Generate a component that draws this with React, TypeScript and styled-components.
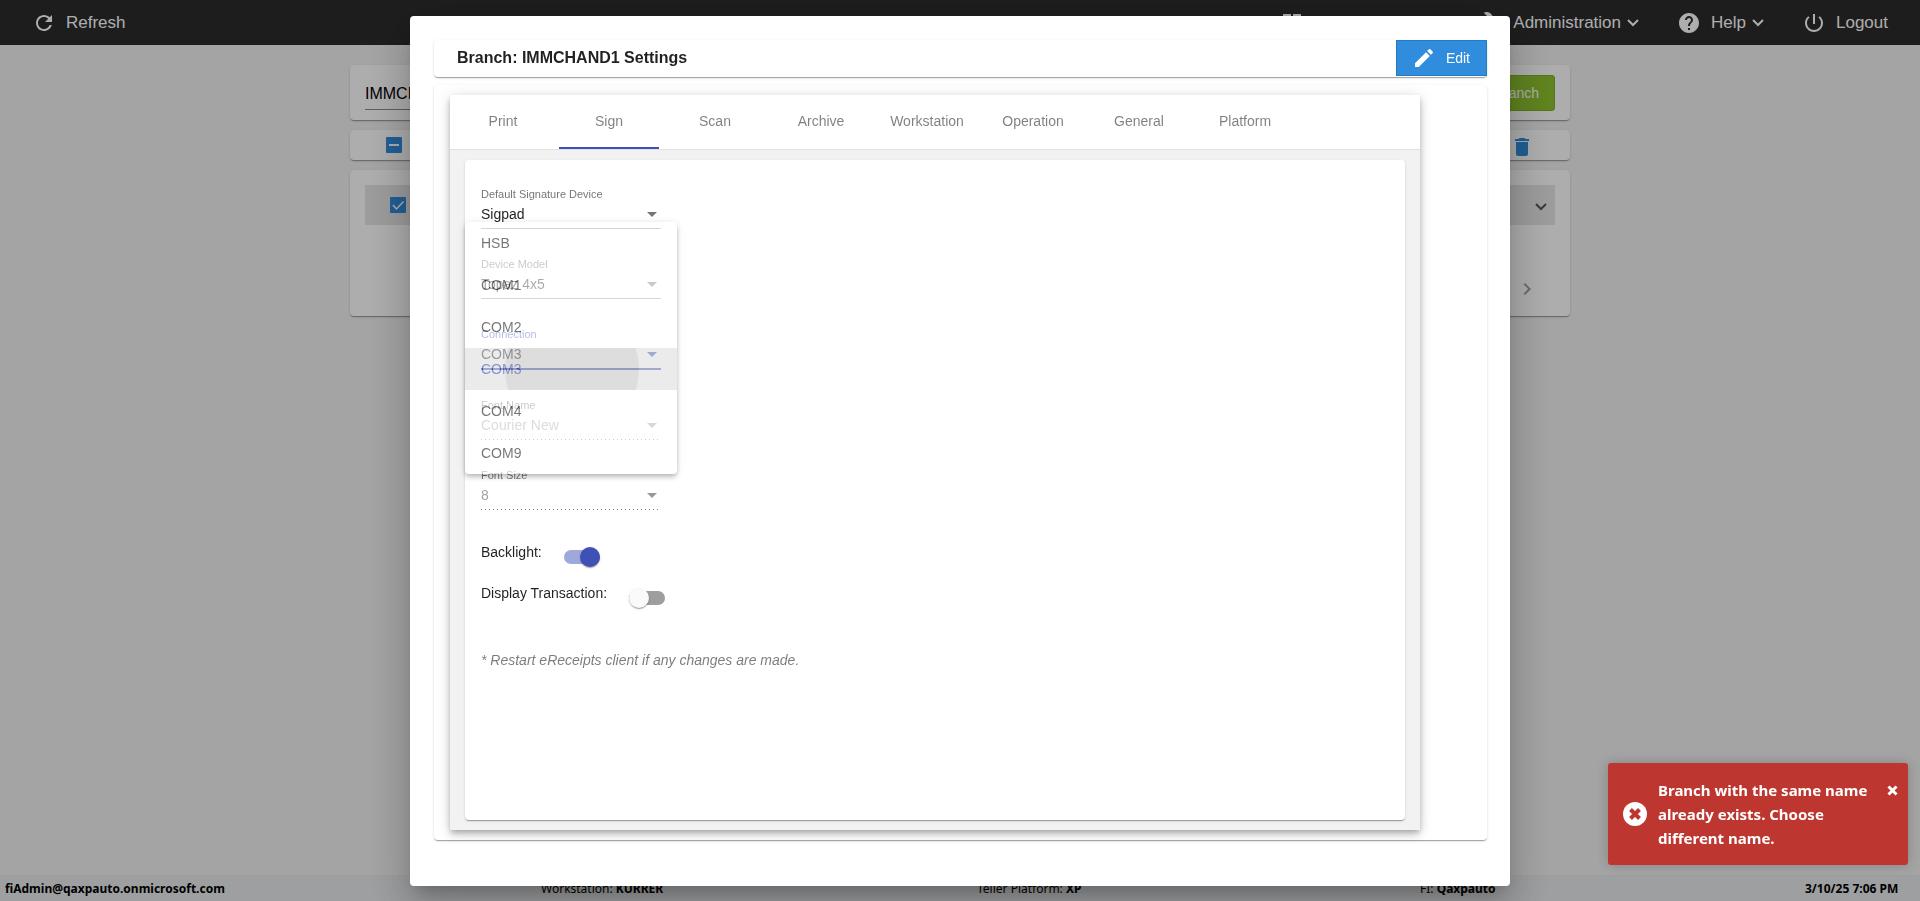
import React from "react";
import styled, { createGlobalStyle, css } from "styled-components";

const GlobalStyle = createGlobalStyle`
  *, *::before, *::after { box-sizing: border-box; }
  html, body, #root { height: 100%; }
  body {
    margin: 0;
    background: #f2f2f2;
    color: rgba(0, 0, 0, 0.87);
    font-family: "Liberation Sans", Arial, sans-serif;
    font-size: 14px;
    overflow: hidden;
  }
  button, input, select { font: inherit; }
  button { cursor: pointer; }
  p, h1 { margin: 0; }
`;

const cardShadow = css`
  box-shadow: 0 2px 1px -1px rgba(0, 0, 0, 0.2), 0 1px 1px rgba(0, 0, 0, 0.14), 0 1px 3px rgba(0, 0, 0, 0.12);
`;

/* ---------- Page shell ---------- */

const Page = styled.div`
  display: flex;
  flex-direction: column;
  min-height: 100vh;
`;

const TopBar = styled.header`
  display: flex;
  justify-content: space-between;
  align-items: center;
  height: 45px;
  padding: 0 32px;
  background: #2c2c2c;
  color: #fff;
`;

const NavGroup = styled.nav`
  display: flex;
  align-items: center;
  gap: 38px;
`;

const NavButton = styled.button`
  display: flex;
  align-items: center;
  height: 36px;
  padding: 0;
  border: 0;
  background: none;
  color: inherit;
  font-size: 17px;
  line-height: 20px;
`;

const NavLabel = styled.span`
  margin: 0 6px 0 10px;
  &:last-child { margin-right: 0; }
`;

const Content = styled.main`
  flex: 1;
  display: flex;
  flex-direction: column;
  gap: 10px;
  width: 100%;
  max-width: 1220px;
  margin: 0 auto;
  padding-top: 20px;
`;

const Card = styled.section`
  border-radius: 4px;
  background: #fff;
  ${cardShadow}
`;

const SearchCard = styled(Card)`
  display: flex;
  justify-content: space-between;
  align-items: flex-start;
  padding: 10px 15px 9px;
`;

const SearchInput = styled.input`
  width: 320px;
  height: 35px;
  padding: 4px 0 0;
  border: 0;
  border-bottom: 1px solid #8c8c8c;
  background: none;
  color: #000;
  font-size: 16px;
  outline: 0;
`;

const AddButton = styled.button`
  height: 36px;
  padding: 0 15px;
  border: 1px solid #7eae28;
  border-radius: 3px;
  background: #8dc22e;
  color: #fff;
`;

const ActionCard = styled(Card)`
  display: flex;
  justify-content: space-between;
  align-items: flex-start;
  height: 30px;
  padding: 5px 36px 0;
`;

const CheckLabel = styled.label`
  position: relative;
  display: flex;
  width: 16px;
  height: 16px;
  margin-top: 2px;
`;

const HiddenCheck = styled.input`
  position: absolute;
  inset: 0;
  margin: 0;
  opacity: 0;
`;

const PlainButton = styled.button`
  display: flex;
  padding: 0;
  border: 0;
  background: none;
`;

const ListCard = styled(Card)`
  display: flex;
  flex-direction: column;
  justify-content: space-between;
  height: 146px;
  padding: 15px;
`;

const BranchRow = styled.div`
  display: flex;
  justify-content: space-between;
  align-items: flex-start;
  height: 40px;
  padding: 10px 8px 0 25px;
  background: #e6e6e6;
`;

const ExpandButton = styled(PlainButton)`
  padding: 8px 0;
`;

const Pager = styled.div`
  display: flex;
  justify-content: flex-end;
  padding-right: 16px;
`;

const Footer = styled.footer`
  display: grid;
  grid-template-columns: 536fr 436fr 443fr 385fr 103fr;
  align-items: center;
  height: 26px;
  padding: 0 12px 0 5px;
  background: #e8eaec;
  color: #000;
  font-family: "Noto Sans", sans-serif;
  font-size: 12px;
  white-space: nowrap;
`;

/* ---------- Dialog ---------- */

const Backdrop = styled.div`
  position: fixed;
  inset: 0;
  display: flex;
  justify-content: center;
  align-items: flex-start;
  padding: 16px 16px 15px;
  background: rgba(0, 0, 0, 0.32);
`;

const Dialog = styled.div`
  display: flex;
  flex-direction: column;
  gap: 8px;
  width: 1100px;
  max-width: 100%;
  height: 100%;
  padding: 24px 23px 46px 24px;
  border-radius: 4px;
  background: #fff;
  box-shadow: 0 11px 15px -7px rgba(0, 0, 0, 0.2), 0 24px 38px 3px rgba(0, 0, 0, 0.14), 0 9px 46px 8px rgba(0, 0, 0, 0.12);
`;

const TitleCard = styled(Card)`
  display: flex;
  justify-content: space-between;
  align-items: flex-start;
  height: 37px;
  padding-left: 23px;
`;

const Title = styled.h1`
  font-size: 16px;
  line-height: 36px;
  font-weight: 700;
`;

const EditButton = styled.button`
  display: flex;
  align-items: center;
  gap: 10px;
  height: 36px;
  padding: 0 16px 0 15px;
  border: 1px solid #2879be;
  background: #308ddd;
  color: #fff;
`;

const SettingsCard = styled(Card)`
  flex: 1;
  display: flex;
  padding: 10px 16px;
`;

const TabPanel = styled.div`
  display: flex;
  flex-direction: column;
  width: 95%;
  background: #f2f2f2;
  box-shadow: 0 3px 5px -1px rgba(0, 0, 0, 0.2), 0 5px 8px rgba(0, 0, 0, 0.14), 0 1px 14px rgba(0, 0, 0, 0.12);
`;

const TabBar = styled.div`
  display: flex;
  gap: 6px;
  height: 55px;
  padding: 0 3px;
  border-bottom: 1px solid #e0e0e0;
  background: #fff;
`;

const Tab = styled.button<{ $active?: boolean }>`
  width: 100px;
  padding: 0;
  border: 0;
  border-bottom: 2px solid ${({ $active }) => ($active ? "#3f51b5" : "transparent")};
  background: none;
  color: rgba(0, 0, 0, 0.5);
`;

const FormCard = styled(Card)`
  flex: 1;
  display: flex;
  flex-direction: column;
  margin: 10px 15px;
  padding: 27px 16px 16px;
`;

const FieldList = styled.div`
  position: relative;
  display: flex;
  flex-direction: column;
  align-items: flex-start;
  gap: 28px;
`;

type FieldKind = "normal" | "focused" | "disabled";

const arrowColors: Record<FieldKind, string> = {
  normal: "rgba(0, 0, 0, 0.54)",
  focused: "#3f51b5",
  disabled: "rgba(0, 0, 0, 0.4)",
};

const FieldBox = styled.div<{ $kind: FieldKind }>`
  position: relative;
  display: flex;
  flex-direction: column;
  width: 180px;
  border-bottom: ${({ $kind }) =>
    $kind === "focused" ? "2px solid #3f51b5" : $kind === "normal" ? "1px solid #949494" : "0"};
  padding-bottom: ${({ $kind }) => ($kind === "disabled" ? 1 : 0)}px;
  ${({ $kind }) =>
    $kind === "disabled" &&
    css`
      background: linear-gradient(to right, rgba(0, 0, 0, 0.5) 0, rgba(0, 0, 0, 0.5) 1px, transparent 1px) 0 100% / 4px 1px repeat-x;
    `}
`;

const FieldLabel = styled.label<{ $focused?: boolean }>`
  color: ${({ $focused }) => ($focused ? "#3f51b5" : "rgba(0, 0, 0, 0.56)")};
  font-size: 11px;
  line-height: 14px;
`;

const FieldSelect = styled.select`
  width: 100%;
  height: 27px;
  padding: 0 0 1px;
  border: 0;
  background: none;
  color: rgba(0, 0, 0, 0.87);
  appearance: none;
  outline: 0;
  opacity: 1;
  &:disabled { color: rgba(0, 0, 0, 0.38); }
`;

const Arrow = styled.span<{ $kind: FieldKind }>`
  position: absolute;
  right: 4px;
  top: 25px;
  border: 5px solid transparent;
  border-bottom: 0;
  border-top-color: ${({ $kind }) => arrowColors[$kind]};
  pointer-events: none;
`;

const Menu = styled.div`
  position: absolute;
  z-index: 2;
  top: 35px;
  left: -16px;
  width: 212px;
  border-radius: 4px;
  background: #fff;
  overflow: hidden;
  opacity: 0.62;
  box-shadow: 0 2px 4px -1px rgba(0, 0, 0, 0.3), 0 4px 5px rgba(0, 0, 0, 0.2), 0 1px 10px rgba(0, 0, 0, 0.16);
`;

const Option = styled.button<{ $selected?: boolean }>`
  position: relative;
  display: flex;
  align-items: center;
  width: 100%;
  height: 42px;
  padding: 0 16px;
  border: 0;
  overflow: hidden;
  background: ${({ $selected }) => ($selected ? "rgba(0, 0, 0, 0.12)" : "none")};
  color: ${({ $selected }) => ($selected ? "#3f51b5" : "rgba(0, 0, 0, 0.87)")};
`;

const Ripple = styled.span`
  position: absolute;
  left: 40px;
  top: 50%;
  width: 134px;
  height: 134px;
  margin-top: -67px;
  border-radius: 50%;
  background: rgba(0, 0, 0, 0.1);
`;

const Toggles = styled.div`
  display: flex;
  flex-direction: column;
  gap: 21px;
  margin-top: 29px;
`;

const ToggleRow = styled.label`
  display: flex;
  align-items: flex-start;
  gap: 22px;
  height: 20px;
  line-height: 26px;
`;

const ToggleInput = styled.input`
  position: relative;
  appearance: none;
  width: 36px;
  height: 14px;
  margin: 11px 0 0;
  border-radius: 7px;
  background: #9e9e9e;
  &::before {
    content: "";
    position: absolute;
    top: -3px;
    left: 0;
    width: 20px;
    height: 20px;
    border-radius: 50%;
    background: #fafafa;
    box-shadow: 0 2px 1px -1px rgba(0, 0, 0, 0.2), 0 1px 1px rgba(0, 0, 0, 0.14), 0 1px 3px rgba(0, 0, 0, 0.12);
  }
  &:checked { background: #9fa8da; }
  &:checked::before { left: 16px; background: #3f51b5; }
`;

const Note = styled.p`
  margin-top: 51px;
  color: rgba(0, 0, 0, 0.52);
  font-style: italic;
  line-height: 18px;
`;

/* ---------- Toast ---------- */

const Toast = styled.div`
  position: fixed;
  right: 12px;
  bottom: 36px;
  display: flex;
  align-items: center;
  width: 300px;
  padding: 15px;
  border-radius: 3px;
  background: #bd362f;
  color: #fff;
  box-shadow: 0 0 12px rgba(0, 0, 0, 0.2);
  font-family: "Noto Sans", sans-serif;
  font-size: 15px;
  font-weight: 700;
  line-height: 24px;
`;

const ToastText = styled.p`
  flex: 1;
  margin-left: 11px;
`;

const ToastClose = styled(PlainButton)`
  align-self: flex-start;
  margin: 7px -5px 0 0;
`;

/* ---------- Icons ---------- */

const Glyph = ({ d, size = 24, color = "currentColor" }: { d: string; size?: number; color?: string }) => (
  <svg width={size} height={size} viewBox="0 0 24 24" fill={color} aria-hidden="true">
    <path d={d} />
  </svg>
);

const REFRESH = "M17.65 6.35C16.2 4.9 14.21 4 12 4c-4.42 0-7.99 3.58-7.99 8s3.57 8 7.99 8c3.73 0 6.84-2.55 7.73-6h-2.08c-.82 2.33-3.04 4-5.65 4-3.31 0-6-2.69-6-6s2.69-6 6-6c1.66 0 3.14.69 4.22 1.78L13 11h7V4l-2.35 2.35z";
const HELP = "M12 2C6.48 2 2 6.48 2 12s4.48 10 10 10 10-4.48 10-10S17.52 2 12 2zm1 17h-2v-2h2v2zm2.07-7.75l-.9.92C13.45 12.9 13 13.5 13 15h-2v-.5c0-1.1.45-2.1 1.17-2.83l1.24-1.26c.37-.36.59-.86.59-1.41 0-1.1-.9-2-2-2s-2 .9-2 2H8c0-2.21 1.79-4 4-4s4 1.79 4 4c0 .88-.36 1.68-.93 2.25z";
const POWER = "M13 3h-2v10h2V3zm4.83 2.17l-1.42 1.42C17.99 7.86 19 9.81 19 12c0 3.87-3.13 7-7 7s-7-3.13-7-7c0-2.19 1.01-4.14 2.58-5.42L6.17 5.17C4.23 6.82 3 9.26 3 12c0 4.97 4.03 9 9 9s9-4.03 9-9c0-2.74-1.23-5.18-3.17-6.83z";
const PENCIL = "M3 17.25V21h3.75L17.81 9.94l-3.75-3.75L3 17.25zM20.71 7.04c.39-.39.39-1.02 0-1.41l-2.34-2.34c-.39-.39-1.02-.39-1.41 0l-1.83 1.83 3.75 3.75 1.83-1.83z";
const TRASH = "M6 19c0 1.1.9 2 2 2h8c1.1 0 2-.9 2-2V7H6v12zM19 4h-3.5l-1-1h-5l-1 1H5v2h14V4z";
const WRENCH = "M22.7 19l-9.1-9.1c.9-2.3.4-5-1.5-6.9-2-2-5-2.4-7.4-1.3L9 6 6 9 1.6 4.7C.4 7.1.9 10.1 2.9 12.1c1.9 1.9 4.6 2.4 6.9 1.5l9.1 9.1c.4.4 1 .4 1.4 0l2.3-2.3c.5-.4.5-1.1.1-1.4z";
const DASHBOARD = "M3 13h8V3H3v10zm0 8h8v-6H3v6zm10 0h8V11h-8v10zm0-18v6h8V3h-8z";
const NEXT = "M10 6L8.59 7.41 13.17 12l-4.58 4.59L10 18l6-6z";

const Chevron = ({ color = "currentColor" }: { color?: string }) => (
  <svg width="12" height="8" viewBox="0 0 12 8" fill="none" stroke={color} strokeWidth="2" aria-hidden="true">
    <path d="M1 1l5 5 5-5" />
  </svg>
);

const BoxIcon = ({ checked }: { checked?: boolean }) => (
  <svg width="16" height="16" viewBox="0 0 16 16" fill="none" aria-hidden="true">
    <rect width="16" height="16" rx="1" fill="#308ddd" />
    <path d={checked ? "M3 8l3.5 4L13.500 4.500" : "M3 8h10"} stroke="#fff" strokeWidth={checked ? 1.5 : 2} />
  </svg>
);

const CircleX = () => (
  <svg width="24" height="24" viewBox="0 0 24 24" aria-hidden="true">
    <circle cx="12" cy="12" r="12" fill="#fff" />
    <path d="M7.500 7.500l9 9M16.500 7.500l-9 9" stroke="#bd362f" strokeWidth="4" />
  </svg>
);

const CloseX = () => (
  <svg width="11" height="11" viewBox="0 0 11 11" aria-hidden="true">
    <path d="M1.500 1.500l8 8M9.500 1.500l-8 8" stroke="#fff" strokeWidth="3" />
  </svg>
);

/* ---------- Data ---------- */

const tabs = ["Print", "Sign", "Scan", "Archive", "Workstation", "Operation", "General", "Platform"];

const fields: { id: string; label: string; value: string; kind: FieldKind }[] = [
  { id: "device", label: "Default Signature Device", value: "Sigpad", kind: "normal" },
  { id: "model", label: "Device Model", value: "Topaz 4x5", kind: "normal" },
  { id: "connection", label: "Connection", value: "COM3", kind: "focused" },
  { id: "font-name", label: "Font Name", value: "Courier New", kind: "disabled" },
  { id: "font-size", label: "Font Size", value: "8", kind: "disabled" },
];

const ports = ["HSB", "COM1", "COM2", "COM3", "COM4", "COM9"];

export default function App() {
  return (
    <>
      <GlobalStyle />
      <Page>
        <TopBar>
          <NavGroup>
            <NavButton><Glyph d={REFRESH} /><NavLabel>Refresh</NavLabel></NavButton>
          </NavGroup>
          <NavGroup>
            <NavButton><Glyph d={DASHBOARD} /><NavLabel>Configurations</NavLabel><Chevron /></NavButton>
            <NavButton><Glyph d={WRENCH} /><NavLabel>Administration</NavLabel><Chevron /></NavButton>
            <NavButton><Glyph d={HELP} /><NavLabel>Help</NavLabel><Chevron /></NavButton>
            <NavButton><Glyph d={POWER} /><NavLabel>Logout</NavLabel></NavButton>
          </NavGroup>
        </TopBar>
        <Content>
          <SearchCard>
            <SearchInput aria-label="Search branches" defaultValue="IMMCHAND1" />
            <AddButton>Add Branch</AddButton>
          </SearchCard>
          <ActionCard>
            <CheckLabel><HiddenCheck type="checkbox" aria-label="Select all" /><BoxIcon /></CheckLabel>
            <PlainButton aria-label="Delete"><Glyph d={TRASH} color="#308ddd" /></PlainButton>
          </ActionCard>
          <ListCard>
            <BranchRow>
              <CheckLabel><HiddenCheck type="checkbox" aria-label="Select branch" defaultChecked /><BoxIcon checked /></CheckLabel>
              <ExpandButton aria-label="Expand"><Chevron color="#555" /></ExpandButton>
            </BranchRow>
            <Pager>
              <PlainButton aria-label="Next page"><Glyph d={NEXT} color="#a0a0a0" /></PlainButton>
            </Pager>
          </ListCard>
        </Content>
        <Footer>
          <b>fiAdmin@qaxpauto.onmicrosoft.com</b>
          <span>Workstation: <b>KURRER</b></span>
          <span>Teller Platform: <b>XP</b></span>
          <span>FI: <b>Qaxpauto</b></span>
          <b>3/10/25 7:06 PM</b>
        </Footer>
      </Page>

      <Backdrop>
        <Dialog role="dialog" aria-labelledby="dialog-title">
          <TitleCard>
            <Title id="dialog-title">Branch: IMMCHAND1 Settings</Title>
            <EditButton><Glyph d={PENCIL} />Edit</EditButton>
          </TitleCard>
          <SettingsCard>
            <TabPanel>
              <TabBar role="tablist">
                {tabs.map((name) => (
                  <Tab key={name} role="tab" aria-selected={name === "Sign"} $active={name === "Sign"}>{name}</Tab>
                ))}
              </TabBar>
              <FormCard>
                <FieldList>
                  {fields.map(({ id, label, value, kind }) => (
                    <FieldBox key={id} $kind={kind}>
                      <FieldLabel htmlFor={id} $focused={kind === "focused"}>{label}</FieldLabel>
                      <FieldSelect id={id} disabled={kind === "disabled"} defaultValue={value}>
                        <option>{value}</option>
                      </FieldSelect>
                      <Arrow $kind={kind} />
                    </FieldBox>
                  ))}
                  <Menu role="listbox">
                    {ports.map((port) => (
                      <Option key={port} role="option" aria-selected={port === "COM3"} $selected={port === "COM3"}>
                        {port}
                        {port === "COM3" && <Ripple />}
                      </Option>
                    ))}
                  </Menu>
                </FieldList>
                <Toggles>
                  <ToggleRow>Backlight:<ToggleInput type="checkbox" defaultChecked /></ToggleRow>
                  <ToggleRow>Display Transaction:<ToggleInput type="checkbox" /></ToggleRow>
                </Toggles>
                <Note>* Restart eReceipts client if any changes are made.</Note>
              </FormCard>
            </TabPanel>
          </SettingsCard>
        </Dialog>
      </Backdrop>

      <Toast role="alert">
        <CircleX />
        <ToastText>Branch with the same name already exists. Choose different name.</ToastText>
        <ToastClose aria-label="Close"><CloseX /></ToastClose>
      </Toast>
    </>
  );
}
